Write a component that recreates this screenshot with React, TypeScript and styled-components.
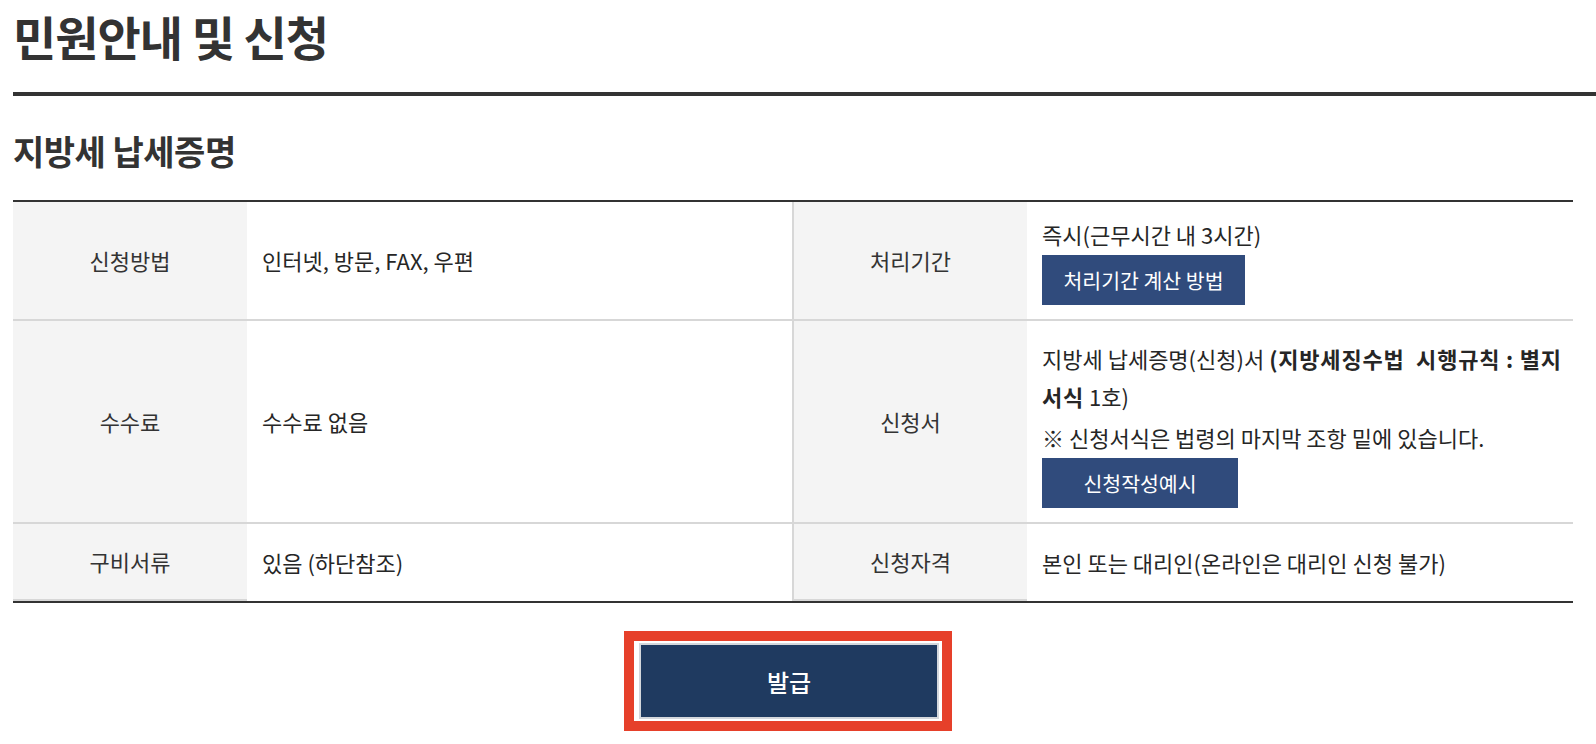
import React from "react";
import styled, { createGlobalStyle } from "styled-components";

const GlobalStyle = createGlobalStyle`
  html, body {
    margin: 0;
    padding: 0;
    background: #ffffff;
  }
  body {
    font-family: "Noto Sans CJK KR", "Noto Sans KR", "Noto Sans", sans-serif;
    color: #333333;
  }
  * { box-sizing: border-box; }
`;

const Page = styled.div`
  padding: 12px 0 0 13px;
`;

const Header = styled.header`
  padding-bottom: 33px;
  border-bottom: 4px solid #333333;
`;

const Title = styled.h1`
  margin: 0;
  font-size: 47px;
  line-height: 1;
  letter-spacing: -1px;
  font-weight: 700;
  color: #333333;
`;

const Section = styled.section`
  width: 1560px;
`;

const SectionTitle = styled.h2`
  margin: 38px 0 0;
  font-size: 34px;
  line-height: 1;
  letter-spacing: -0.5px;
  font-weight: 700;
  color: #333333;
`;

const InfoTable = styled.table`
  width: 100%;
  margin-top: 32px;
  table-layout: fixed;
  border-collapse: separate;
  border-spacing: 0;
  border-top: 2px solid #333333;
  border-bottom: 2px solid #333333;
`;

const Label = styled.th<{ $divider?: boolean }>`
  background: #f4f4f4;
  padding: 18px 15px 19px;
  font-size: 22px;
  line-height: 38px;
  font-weight: 400;
  color: #333333;
  text-align: center;
  vertical-align: middle;
  border-bottom: 2px solid #d7d7d7;
  border-left: ${(p) => (p.$divider ? "2px solid #d7d7d7" : "none")};
`;

const Value = styled.td<{ $pad?: string; $last?: boolean }>`
  padding: ${(p) => p.$pad || "18px 15px 19px"};
  font-size: 22px;
  line-height: 38px;
  color: #262626;
  text-align: left;
  vertical-align: middle;
  border-bottom: ${(p) => (p.$last ? "none" : "2px solid #d7d7d7")};
`;

const Line = styled.p<{ $gap?: number }>`
  margin: ${(p) => p.$gap || 0}px 0 0;
  white-space: nowrap;
`;

const Strong = styled.strong`
  font-weight: 700;
  letter-spacing: 0.8px;
`;

const SmallButton = styled.button<{ $w: number; $gap?: number }>`
  display: block;
  width: ${(p) => p.$w}px;
  height: 50px;
  margin-top: ${(p) => p.$gap ?? 2}px;
  padding: 0;
  border: none;
  background: #304b7c;
  color: #ffffff;
  font-family: inherit;
  font-size: 20.5px;
  line-height: 50px;
  font-weight: 400;
  text-align: center;
  cursor: pointer;
`;

const Actions = styled.div`
  display: flex;
  justify-content: center;
  margin-top: 28px;
  padding-right: 10px;
`;

const Highlight = styled.div`
  border: 10px solid #e6402a;
  padding: 2px 3px 2px 5px;
  background: #ffffff;
`;

const IssueButton = styled.button`
  display: block;
  width: 300px;
  height: 76px;
  border: 2px solid #d4d7dc;
  background: #1f3a60;
  color: #ffffff;
  font-family: inherit;
  font-size: 24px;
  font-weight: 500;
  cursor: pointer;
`;

export default function App() {
  return (
    <>
      <GlobalStyle />
      <Page>
        <Header>
          <Title>민원안내 및 신청</Title>
        </Header>
        <Section>
          <SectionTitle>지방세 납세증명</SectionTitle>
          <InfoTable>
            <colgroup>
              <col style={{ width: 234 }} />
              <col style={{ width: 545 }} />
              <col style={{ width: 235 }} />
              <col style={{ width: 546 }} />
            </colgroup>
            <tbody>
              <tr>
                <Label>신청방법</Label>
                <Value>인터넷, 방문, FAX, 우편</Value>
                <Label $divider>처리기간</Label>
                <Value $pad="13px 15px 14px">
                  <Line>즉시(근무시간 내 3시간)</Line>
                  <SmallButton $w={203}>처리기간 계산 방법</SmallButton>
                </Value>
              </tr>
              <tr>
                <Label>수수료</Label>
                <Value>수수료 없음</Value>
                <Label $divider>신청서</Label>
                <Value $pad="18px 15px 14px">
                  <Line>
                    지방세 납세증명(신청)서 <Strong>(지방세징수법 &nbsp;시행규칙 : 별지</Strong>
                    <br />
                    <Strong>서식</Strong> 1호)
                  </Line>
                  <Line $gap={3}>※ 신청서식은 법령의 마지막 조항 밑에 있습니다.</Line>
                  <SmallButton $w={196}>신청작성예시</SmallButton>
                </Value>
              </tr>
              <tr>
                <Label>구비서류</Label>
                <Value $last>있음 (하단참조)</Value>
                <Label $divider>신청자격</Label>
                <Value $last>본인 또는 대리인(온라인은 대리인 신청 불가)</Value>
              </tr>
            </tbody>
          </InfoTable>
          <Actions>
            <Highlight>
              <IssueButton>발급</IssueButton>
            </Highlight>
          </Actions>
        </Section>
      </Page>
    </>
  );
}
